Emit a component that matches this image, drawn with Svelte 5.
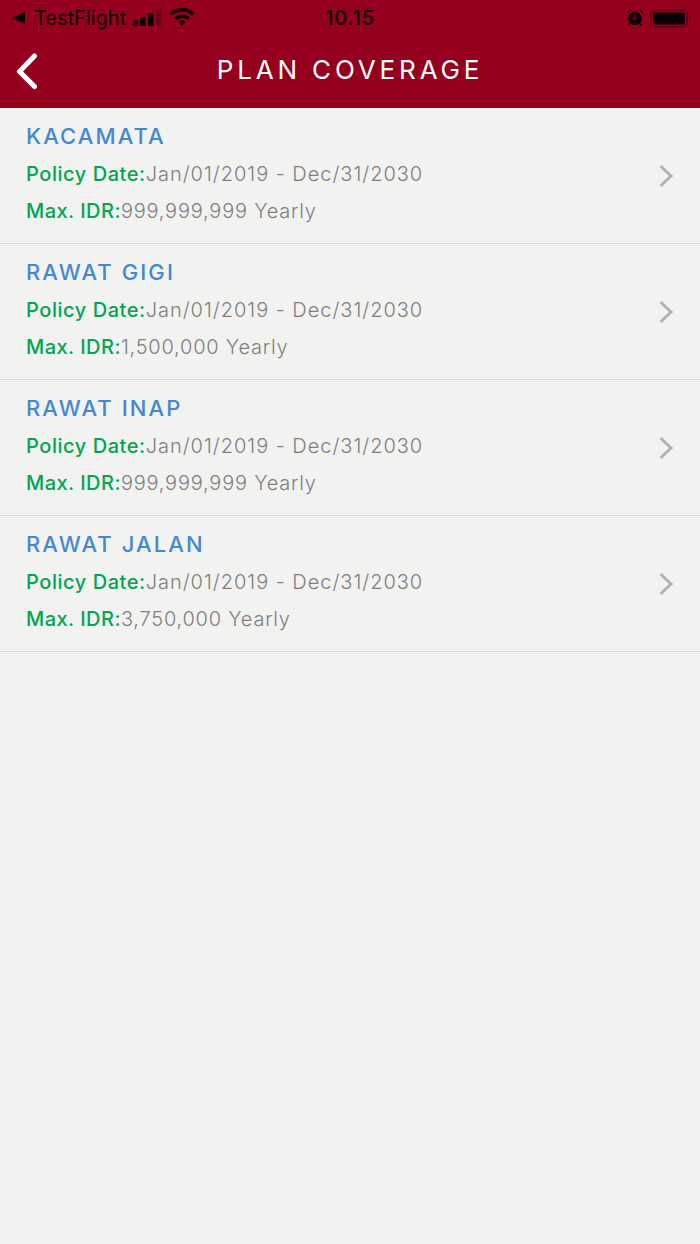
<script>
  const plans = [
    { name: 'KACAMATA', max: '999,999,999 Yearly' },
    { name: 'RAWAT GIGI', max: '1,500,000 Yearly' },
    { name: 'RAWAT INAP', max: '999,999,999 Yearly' },
    { name: 'RAWAT JALAN', max: '3,750,000 Yearly' }
  ];
</script>

<div class="page">
  <header class="top">
    <div class="status">
      <div class="left">
        <svg class="back-tri" width="13" height="14" viewBox="0 0 13 14"><path d="M13 1v12L0 7z" fill="#0c0005"/></svg>
        <span class="carrier">TestFlight</span>
        <svg class="signal" width="29" height="18" viewBox="0 0 29 18">
          <rect x="0" y="11.500" width="5" height="5.500" rx="1" fill="#0c0005"/>
          <rect x="7" y="8" width="5.500" height="9" rx="1" fill="#0c0005"/>
          <rect x="15" y="4.500" width="5.500" height="12.500" rx="1" fill="#0c0005"/>
          <rect x="23" y="0" width="5.500" height="17" rx="1" fill="#6f0019"/>
        </svg>
        <svg class="wifi" width="26" height="19" viewBox="0 0 26 19" fill="#0c0005">
          <path d="M13 1C8 1 3.800 2.900 0.500 6l2.400 2.600C5.600 6 9.100 4.500 13 4.500S20.400 6 23.100 8.600L25.500 6C22.200 2.900 18 1 13 1z"/>
          <path d="M13 7.500c-3 0-5.800 1.200-7.800 3.100l2.400 2.600c1.400-1.400 3.300-2.200 5.400-2.200s4 .8 5.400 2.200l2.400-2.600c-2-1.900-4.800-3.100-7.800-3.100z"/>
          <path d="M13 13.500c-1.400 0-2.600.5-3.500 1.400L13 18.700l3.500-3.800c-.9-.9-2.100-1.400-3.500-1.400z"/>
        </svg>
      </div>
      <span class="time">10.15</span>
      <div class="right">
        <svg class="alarm" width="16" height="18" viewBox="0 0 16 18">
          <circle cx="8" cy="9.500" r="6.800" fill="#0c0005"/>
          <path d="M8 5.500v4.300H4.800" fill="none" stroke="#96001f" stroke-width="1.300"/>
          <path d="M0.500 4.500 4 1.200 2.300 .8.400 2.600zM15.500 4.500 12 1.200l1.700-.4 1.900 1.800z" fill="#0c0005"/>
          <path d="M2.500 14.500 1 17M13.500 14.500 15 17" stroke="#0c0005" stroke-width="1.500"/>
        </svg>
        <svg class="battery" width="41" height="19" viewBox="0 0 41 19">
          <rect x="0.750" y="1.250" width="36.500" height="16.500" rx="4" fill="none" stroke="#5f0016" stroke-width="1.500"/>
          <rect x="3" y="3.500" width="32" height="12" rx="2" fill="#0c0005"/>
          <path d="M39 7v5c1.300-.4 2-1.400 2-2.500S40.300 7.400 39 7z" fill="#5f0016"/>
        </svg>
      </div>
    </div>
    <div class="nav">
      <svg class="chev" width="24" height="38" viewBox="0 0 24 38"><path d="M19.500 4 4.500 19.500 19.500 34.500" fill="none" stroke="#fff" stroke-width="5" stroke-linecap="round" stroke-linejoin="round"/></svg>
      <h1>PLAN COVERAGE</h1>
    </div>
  </header>

  <ul class="list">
    {#each plans as plan}
      <li class="row">
        <div class="info">
          <div class="name">{plan.name}</div>
          <div class="line"><span class="label date-label">Policy Date:</span><span class="date">Jan/01/2019 - Dec/31/2030</span></div>
          <div class="line"><span class="label max-label">Max. IDR:</span><span class="max">{plan.max}</span></div>
        </div>
        <svg class="arrow" width="16" height="24" viewBox="0 0 16 24"><path d="M2.500 2 13 12 2.500 22" fill="none" stroke="#b3b3b3" stroke-width="3"/></svg>
      </li>
    {/each}
  </ul>
</div>

<style>
  :global(body) {
    margin: 0;
    background: #f2f2f0;
  }
  .page {
    min-height: 1244px;
    background: #f2f2f0;
    font-family: Inter, "Liberation Sans", sans-serif;
  }
  .top {
    background: #96001f;
    height: 108px;
  }
  .status {
    height: 36px;
    display: grid;
    grid-template-columns: 1fr auto 1fr;
    align-items: center;
    color: #0c0005;
  }
  .left {
    display: flex;
    align-items: center;
    padding-left: 12px;
  }
  .carrier {
    font-size: 20px;
    margin-left: 9px;
    line-height: 36px;
  }
  .signal {
    margin-left: 7px;
  }
  .wifi {
    margin-left: 7px;
    margin-top: -3px;
  }
  .time {
    font-size: 20px;
    font-weight: 500;
    letter-spacing: 0.8px;
  }
  .right {
    display: flex;
    justify-content: flex-end;
    align-items: center;
    padding-right: 9px;
    gap: 7px;
  }
  .nav {
    height: 72px;
    display: flex;
    align-items: center;
    justify-content: center;
    position: relative;
  }
  .chev {
    position: absolute;
    left: 15px;
    top: 16px;
  }
  h1 {
    margin: 0 0 6px;
    color: #fff;
    font-size: 26px;
    font-weight: 400;
    letter-spacing: 3.85px;
  }
  .list {
    list-style: none;
    margin: 0;
    padding: 0;
  }
  .row {
    height: 135px;
    border-bottom: 1px solid #d8d8d6;
    display: flex;
    justify-content: space-between;
    align-items: center;
    padding: 0 26px;
  }
  .info {
    display: flex;
    flex-direction: column;
    align-self: flex-start;
    padding-top: 12px;
  }
  .name {
    color: #4489d0;
    font-size: 22px;
    font-weight: 500;
    line-height: 33px;
    letter-spacing: 2.1px;
  }
  .line {
    color: #7f7f7f;
    font-size: 20px;
    line-height: 37px;
    margin-top: 3px;
  }
  .line + .line {
    margin-top: 0;
  }
  .label {
    color: #00a651;
    font-weight: 500;
  }
  .date-label {
    letter-spacing: 0.55px;
  }
  .max-label {
    letter-spacing: 0.45px;
  }
  .date {
    font-weight: 300;
    letter-spacing: 0.97px;
  }
  .max {
    font-weight: 300;
    letter-spacing: 0.78px;
  }
  .arrow {
    margin-top: 0;
  }
</style>
